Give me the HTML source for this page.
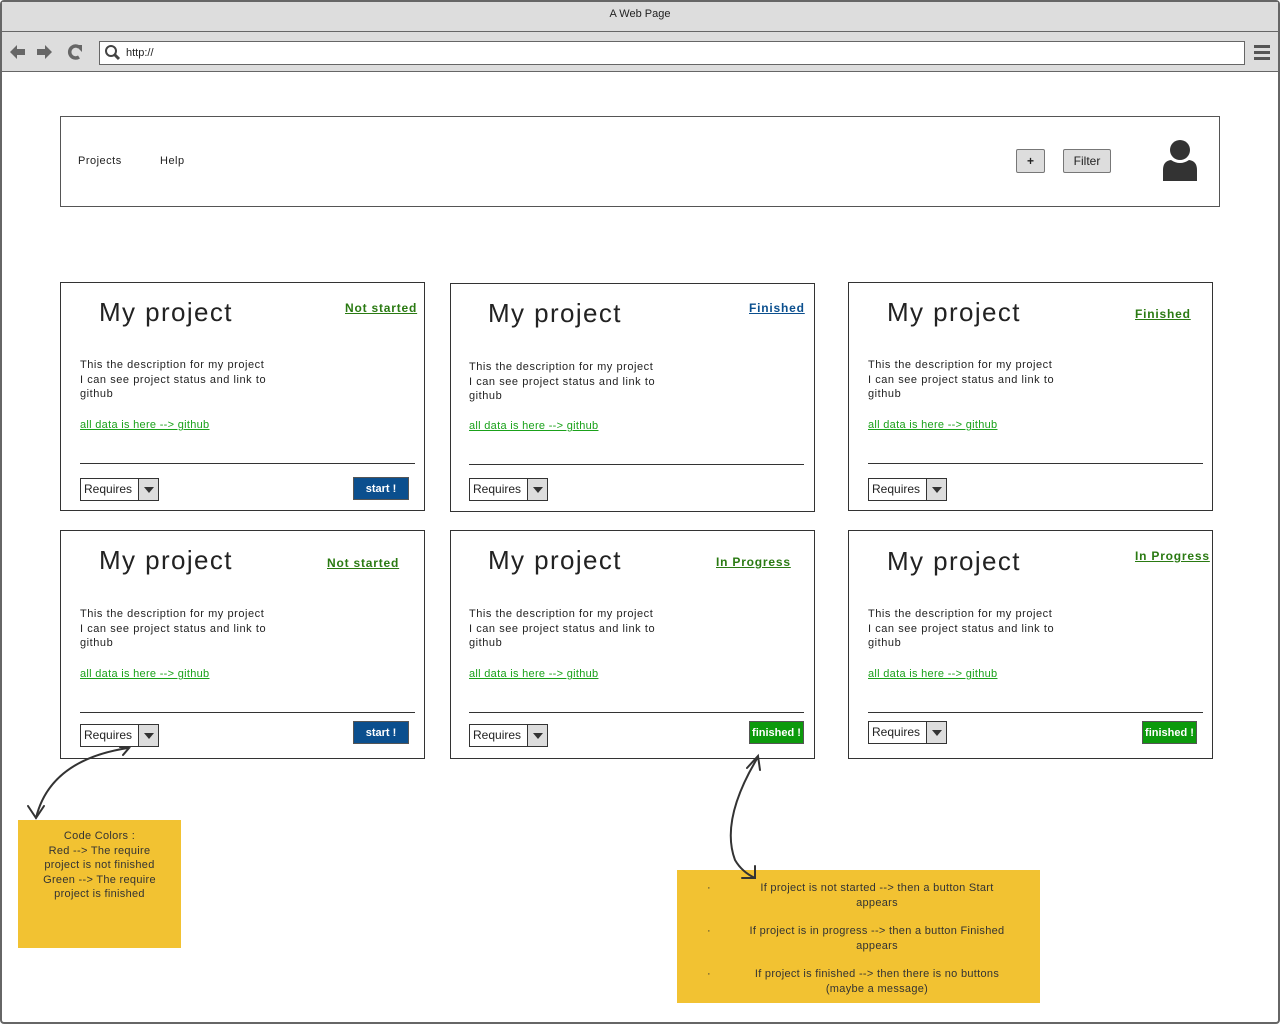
<!DOCTYPE html>
<html><head><meta charset="utf-8"><style>
*{margin:0;padding:0;box-sizing:border-box}
body{width:1280px;height:1024px;position:relative;background:#fff;font-family:"Liberation Sans",sans-serif;color:#222;overflow:hidden}
.a{position:absolute}
.card{position:absolute;border:1px solid #333;width:365px;height:229px;background:#fff}
.t{position:absolute;font-size:26px;color:#222;letter-spacing:1.4px}
.st{position:absolute;font-size:12px;font-weight:bold;text-decoration:underline;color:#2a7a12;letter-spacing:0.8px}
.d{position:absolute;font-size:11px;line-height:14.5px;color:#222;letter-spacing:0.55px}
.lk{position:absolute;font-size:11px;color:#1aa11a;text-decoration:underline;letter-spacing:0.3px}
.hr{position:absolute;height:1px;background:#333;width:335px}
.dd{position:absolute;width:79px;height:23px;border:1px solid #333;font-size:12px;line-height:21px;padding-left:3px;background:#fff}
.dd i{position:absolute;right:0;top:0;width:20px;height:21px;background:#ddd;border-left:1px solid #333}
.dd i:after{content:"";position:absolute;left:5px;top:8px;border-left:5px solid transparent;border-right:5px solid transparent;border-top:6px solid #333}
.btn{position:absolute;height:23px;color:#fff;font-size:11px;font-weight:bold;text-align:center;line-height:23px;border:1px solid #555}
.blue{background:#0b4f8e;width:56px}
.green{background:#0c9a0c;width:55px}
.note{position:absolute;background:#f2c232;font-size:11px;text-align:center;color:#333;letter-spacing:0.3px}
</style></head><body>
<div class="a" style="left:0;top:0;width:1280px;height:1024px;border:2px solid #666;border-radius:4px"></div>
<div class="a" style="left:2px;top:2px;width:1276px;height:30px;background:#ddd;border-bottom:1px solid #666;font-size:11px;text-align:center;line-height:24px">A Web Page</div>
<div class="a" style="left:2px;top:32px;width:1276px;height:40px;background:#ddd;border-bottom:1px solid #666"></div>
<svg class="a" style="left:8px;top:42px" width="80" height="22"><path d="M2 10 L9 3 L9 7 L17 7 L17 13 L9 13 L9 17 Z" fill="#666"/><path d="M44 10 L37 3 L37 7 L29 7 L29 13 L37 13 L37 17 Z" fill="#666"/><path d="M71 5 A6 6 0 1 0 71 15" stroke="#666" stroke-width="3.5" fill="none"/><path d="M67 3 L74 3 L74 10 Z" fill="#666"/></svg>
<div class="a" style="left:99px;top:41px;width:1146px;height:24px;background:#fff;border:1px solid #666"></div>
<svg class="a" style="left:104px;top:44px" width="18" height="18"><circle cx="7" cy="7" r="5" stroke="#444" stroke-width="2" fill="none"/><path d="M10.5 10.5 L15 15" stroke="#444" stroke-width="3"/></svg>
<div class="a" style="left:126px;top:47px;font-size:11px">http://</div>
<div class="a" style="left:1254px;top:45px;width:16px;height:3px;background:#555;box-shadow:0 6px 0 #555,0 12px 0 #555"></div>
<div class="a" style="left:60px;top:116px;width:1160px;height:91px;border:1px solid #555"></div>
<div class="a" style="left:78px;top:155px;font-size:11px;letter-spacing:0.5px">Projects</div>
<div class="a" style="left:160px;top:155px;font-size:11px;letter-spacing:0.5px">Help</div>
<div class="a" style="left:1016px;top:149px;width:29px;height:24px;background:#ddd;border:1px solid #777;border-radius:2px;font-size:12px;text-align:center;line-height:22px;font-weight:bold">+</div>
<div class="a" style="left:1063px;top:149px;width:48px;height:24px;background:#ddd;border:1px solid #777;border-radius:2px;font-size:12px;text-align:center;line-height:22px">Filter</div>
<svg class="a" style="left:1160px;top:138px" width="40" height="45"><circle cx="20" cy="12" r="10" fill="#333"/><path d="M3 43 L3 32 Q3 23 11 22 Q20 28 29 22 Q37 23 37 32 L37 43 Z" fill="#333"/></svg>

<div class="card" style="left:60px;top:282px">
<div class="t" style="left:38px;top:14px">My project</div>
<div class="st" style="left:284px;top:18px">Not started</div>
<div class="d" style="left:19px;top:75px">This the description for my project<br>I can see project status and link to<br>github</div>
<div class="lk" style="left:19px;top:136px">all data is here --&gt; github</div>
<div class="hr" style="left:19px;top:180px"></div>
<div class="dd" style="left:19px;top:195px">Requires<i></i></div>
<div class="btn blue" style="left:292px;top:194px">start !</div>
</div>
<div class="card" style="left:450px;top:283px">
<div class="t" style="left:37px;top:14px">My project</div>
<div class="st" style="left:298px;top:17px;color:#0b4f8e">Finished</div>
<div class="d" style="left:18px;top:76px">This the description for my project<br>I can see project status and link to<br>github</div>
<div class="lk" style="left:18px;top:136px">all data is here --&gt; github</div>
<div class="hr" style="left:18px;top:180px"></div>
<div class="dd" style="left:18px;top:194px">Requires<i></i></div>
</div>
<div class="card" style="left:848px;top:282px">
<div class="t" style="left:38px;top:14px">My project</div>
<div class="st" style="left:286px;top:24px">Finished</div>
<div class="d" style="left:19px;top:75px">This the description for my project<br>I can see project status and link to<br>github</div>
<div class="lk" style="left:19px;top:136px">all data is here --&gt; github</div>
<div class="hr" style="left:19px;top:180px"></div>
<div class="dd" style="left:19px;top:195px">Requires<i></i></div>
</div>
<div class="card" style="left:60px;top:530px">
<div class="t" style="left:38px;top:14px">My project</div>
<div class="st" style="left:266px;top:25px">Not started</div>
<div class="d" style="left:19px;top:76px">This the description for my project<br>I can see project status and link to<br>github</div>
<div class="lk" style="left:19px;top:137px">all data is here --&gt; github</div>
<div class="hr" style="left:19px;top:181px"></div>
<div class="dd" style="left:19px;top:193px">Requires<i></i></div>
<div class="btn blue" style="left:292px;top:190px">start !</div>
</div>
<div class="card" style="left:450px;top:530px">
<div class="t" style="left:37px;top:14px">My project</div>
<div class="st" style="left:265px;top:24px">In Progress</div>
<div class="d" style="left:18px;top:76px">This the description for my project<br>I can see project status and link to<br>github</div>
<div class="lk" style="left:18px;top:137px">all data is here --&gt; github</div>
<div class="hr" style="left:18px;top:181px"></div>
<div class="dd" style="left:18px;top:193px">Requires<i></i></div>
<div class="btn green" style="left:298px;top:190px">finished !</div>
</div>
<div class="card" style="left:848px;top:530px">
<div class="t" style="left:38px;top:15px">My project</div>
<div class="st" style="left:286px;top:18px">In Progress</div>
<div class="d" style="left:19px;top:76px">This the description for my project<br>I can see project status and link to<br>github</div>
<div class="lk" style="left:19px;top:137px">all data is here --&gt; github</div>
<div class="hr" style="left:19px;top:181px"></div>
<div class="dd" style="left:19px;top:190px">Requires<i></i></div>
<div class="btn green" style="left:293px;top:190px">finished !</div>
</div>

<div class="note" style="left:18px;top:820px;width:163px;height:128px;padding-top:9px;line-height:14.5px">Code Colors :<br>Red --&gt; The require<br>project is not finished<br>Green --&gt; The require<br>project is finished</div>
<div class="note" style="left:677px;top:870px;width:363px;height:133px;line-height:14.5px">
<div class="a" style="left:30px;top:11px">·</div><div class="a" style="left:55px;top:11px;width:290px">If project is not started --&gt; then a button Start<br>appears</div>
<div class="a" style="left:30px;top:54px">·</div><div class="a" style="left:55px;top:54px;width:290px">If project is in progress --&gt; then a button Finished<br>appears</div>
<div class="a" style="left:30px;top:97px">·</div><div class="a" style="left:55px;top:97px;width:290px">If project is finished --&gt; then there is no buttons<br>(maybe a message)</div>
</div>
<svg class="a" style="left:0;top:0" width="1280" height="1024">
<g stroke="#333" stroke-width="2" fill="none" stroke-linecap="round">
<path d="M128 748 Q50 760 36 818"/><path d="M28 806 L36 818 L44 806"/><path d="M120 747 L129 748 L123 755"/>
<path d="M758 757 Q720 820 735 860 Q742 872 755 878"/><path d="M747 768 L758 756 L760 770"/><path d="M742 878 L755 878 L755 866"/>
</g></svg>
</body></html>
